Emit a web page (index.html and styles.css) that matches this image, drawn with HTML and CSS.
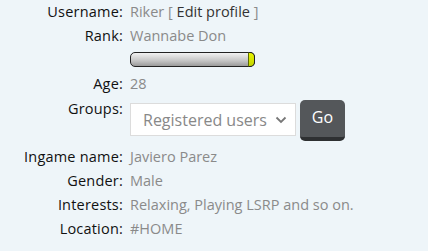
FILE: index.html
```html
<!DOCTYPE html>
<html lang="en">
  <head>
    <meta charset="UTF-8" />
    <title>Profile</title>
    <link rel="stylesheet" href="styles.css">
  </head>
  <body>
    <div class="profile">
      <div class="label">Username:</div>
      <div class="value">Riker [ <a class="edit" href="#">Edit profile</a> ]</div>

      <div class="label">Rank:</div>
      <div class="value">Wannabe Don</div>

      <div class="label"></div>
      <div class="value">
        <div class="bar"><div class="cap"></div></div>
      </div>

      <div class="label">Age:</div>
      <div class="value">28</div>

      <div class="label groups">Groups:</div>
      <div class="value">
        <form class="group-form">
          <div class="select">
            <span>Registered users</span>
            <svg width="12" height="8" viewBox="0 0 12 8">
              <path d="M1.5 1.5 L6 6 L10.5 1.5" fill="none" stroke="#777" stroke-width="1.8" />
            </svg>
          </div>
          <button type="button" class="go">Go</button>
        </form>
      </div>

      <div class="label">Ingame name:</div>
      <div class="value">Javiero Parez</div>

      <div class="label">Gender:</div>
      <div class="value">Male</div>

      <div class="label">Interests:</div>
      <div class="value">Relaxing, Playing LSRP and so on.</div>

      <div class="label">Location:</div>
      <div class="value">#HOME</div>
    </div>
  </body>
</html>
```

FILE: styles.css
```css
body {
  margin: 0;
  background: #eef5f9;
  font-family: "Open Sans", "Noto Sans", sans-serif;
  font-size: 14.5px;
}

div.profile {
  display: grid;
  grid-template-columns: 123px 1fr;
  column-gap: 7px;
  line-height: 24px;
}
div.label {
  text-align: right;
  color: #111;
  letter-spacing: 0.2px;
}
div.value {
  color: #8a8a8a;
}
a.edit {
  color: #333;
  text-decoration: none;
}

div.bar {
  position: relative;
  margin: 4px 0 5px;
  width: 123px;
  height: 13px;
  border: 1px solid #222;
  border-radius: 5px;
  background: linear-gradient(#f2f2f2, #c4c4c4 60%, #9a9a9a);
}
div.cap {
  position: absolute;
  right: -1px;
  top: -1px;
  width: 5px;
  height: 13px;
  border: 1px solid #222;
  border-left-color: #5a6a00;
  border-radius: 0 5px 5px 0;
  background: linear-gradient(#e8f500, #c4d400);
}

div.label.groups {
  padding-top: 3px;
  line-height: 20px;
}
form.group-form {
  display: flex;
  align-items: flex-start;
  gap: 4px;
  padding: 4px 0 4px;
}
div.select {
  display: flex;
  align-items: center;
  justify-content: space-between;
  box-sizing: border-box;
  margin-top: 3px;
  width: 166px;
  height: 33px;
  padding: 0 8px 0 12px;
  background: #fff;
  border: 1px solid #dcdcdc;
  color: #888;
  font-size: 16px;
}
button.go {
  width: 45px;
  height: 41px;
  padding: 0 0 4px;
  border: none;
  border-bottom: 4px solid #2e3032;
  border-radius: 5px;
  background: #54575a;
  color: #fff;
  font-family: "Open Sans", "Noto Sans", sans-serif;
  font-size: 16px;
}
```
